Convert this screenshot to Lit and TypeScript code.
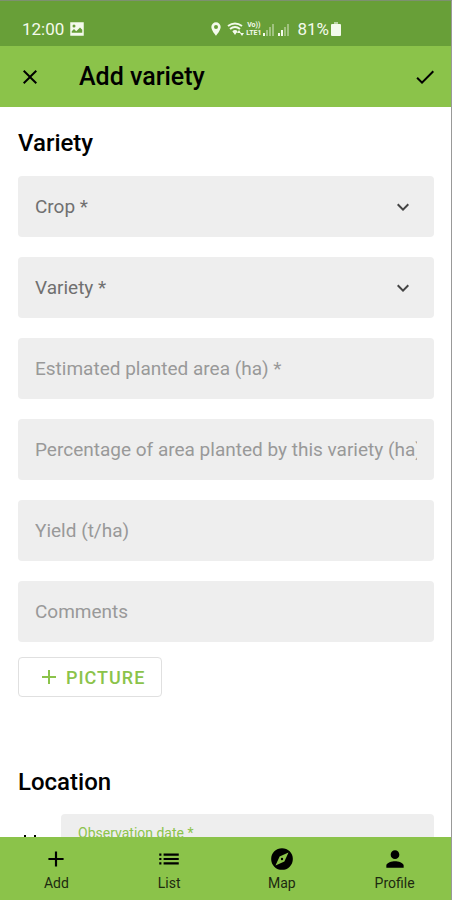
import { LitElement, html, css, svg } from "lit";
import { customElement, state } from "lit/decorators.js";

const icons = {
  close: svg`<path d="M19 6.4 17.6 5 12 10.6 6.4 5 5 6.4 10.6 12 5 17.6 6.4 19 12 13.4 17.6 19 19 17.6 13.4 12z"/>`,
  check: svg`<path d="M9 16.2 4.8 12l-1.4 1.4L9 19 21 7l-1.4-1.4z"/>`,
  plus: svg`<path d="M19 13h-6v6h-2v-6H5v-2h6V5h2v6h6z"/>`,
  list: svg`<path d="M3 13h2v-2H3zm0 4h2v-2H3zm0-8h2V7H3zm4 4h14v-2H7zm0 4h14v-2H7zM7 7v2h14V7z"/>`,
  compass: svg`<path d="M12 10.9a1.1 1.1 0 1 0 0 2.2 1.1 1.1 0 0 0 0-2.2zM12 2a10 10 0 1 0 0 20 10 10 0 0 0 0-20zm2.2 12.2L6 18l3.8-8.2L18 6z"/>`,
  person: svg`<path d="M12 12a4 4 0 1 0 0-8 4 4 0 0 0 0 8zm0 2c-2.7 0-8 1.3-8 4v2h16v-2c0-2.7-5.3-4-8-4z"/>`,
  chevron: svg`<path d="M7.4 8.6 12 13.2l4.6-4.6L18 10l-6 6-6-6z"/>`,
  calendar: svg`<path d="M19 4h-1V2h-2v2H8V2H6v2H5a2 2 0 0 0-2 2v14a2 2 0 0 0 2 2h14a2 2 0 0 0 2-2V6a2 2 0 0 0-2-2zm0 16H5V9h14z"/>`,
  picture: svg`<path fill-rule="evenodd" d="M3 3h18v18H3zM5 17h14v-4l-3-3-5 5-3-3-3 3zM8 6a2 2 0 1 0 0 4 2 2 0 0 0 0-4z"/>`,
  pin: svg`<path d="M12 2a7 7 0 0 0-7 7c0 5.200 7 13 7 13s7-7.800 7-13a7 7 0 0 0-7-7zm0 10a3 3 0 1 1 0-6 3 3 0 0 1 0 6z"/>`,
};

const icon = (name: keyof typeof icons, cls = "icon") =>
  html`<svg class=${cls} viewBox="0 0 24 24" aria-hidden="true">${icons[name]}</svg>`;

// Four bars; `level` of them are drawn at full strength.
const signal = (level: number) => html`<svg class="signal" viewBox="0 0 13 14" aria-hidden="true">
  ${[3, 6, 9, 12].map(
    (h, i) => svg`<rect x=${i * 3} y=${14 - h} width="2" height=${h} opacity=${i < level ? 1 : 0.4} />`
  )}
</svg>`;

@customElement("app-root")
export class AppRoot extends LitElement {
  @state() private selects = ["Crop *", "Variety *"];
  @state() private inputs = [
    "Estimated planted area (ha) *",
    "Percentage of area planted by this variety (ha) *",
    "Yield (t/ha)",
    "Comments",
  ];
  private tabs: [keyof typeof icons, string][] = [
    ["plus", "Add"],
    ["list", "List"],
    ["compass", "Map"],
    ["person", "Profile"],
  ];

  static styles = css`
    :host {
      display: flex;
      flex-direction: column;
      height: 100vh;
      box-sizing: border-box;
      border-top: 1px solid #7d9070;
      border-right: 1px solid #999;
      background: #fff;
      color: #000;
      font-family: Roboto, "Liberation Sans", sans-serif;
    }
    * { box-sizing: border-box; }
    button, input, select { font: inherit; color: inherit; }
    button { border: 0; background: none; padding: 0; cursor: pointer; }
    svg { display: block; fill: currentColor; flex: none; }
    h1, h2 { margin: 0; font-weight: 500; }
    .icon { width: 24px; height: 24px; }
    .status {
      display: flex;
      align-items: center;
      flex: none;
      height: 45px;
      padding: 11px 110px 0 22px;
      background: #689f38;
      color: #f4faec;
      font-size: 17px;
      line-height: 20px;
    }
    .time { margin-right: 4px; }
    .picture { width: 18px; height: 18px; }
    .indicators { display: flex; align-items: center; margin-left: auto; gap: 2px; }
    .pin { width: 18px; height: 16px; }
    .wifi { width: 17px; height: 14px; }
    .lte {
      display: flex;
      flex-direction: column;
      font-size: 7px;
      line-height: 8px;
      font-weight: 700;
      text-align: center;
    }
    .signal { width: 13px; height: 14px; }
    .level { margin-left: 4px; }
    .battery { width: 10px; height: 14px; }
    .bar {
      display: flex;
      align-items: center;
      flex: none;
      height: 61px;
      padding: 0 14px 0 18px;
      background: #8bc34a;
    }
    .title { flex: 1; margin-left: 37px; font-size: 25px; line-height: 32px; }
    .content {
      flex: 1;
      min-height: 0;
      overflow-y: auto;
      scrollbar-width: none;
      padding: 20px 17px 0 18px;
    }
    .heading { font-size: 24px; line-height: 32px; }
    .fields { display: flex; flex-direction: column; gap: 20px; margin-top: 17px; }
    .field {
      display: block;
      width: 100%;
      height: 61px;
      padding: 0 17px;
      border: 0;
      border-radius: 4px;
      background: #eee;
      color: #707070;
      font-size: 19px;
    }
    .field::placeholder { color: #999; opacity: 1; }
    .choice { display: grid; align-items: center; }
    .choice > * { grid-area: 1 / 1; }
    .choice .field { appearance: none; }
    .chevron {
      width: 24px;
      height: 24px;
      justify-self: end;
      margin-right: 19px;
      color: #444;
      pointer-events: none;
    }
    .add {
      display: flex;
      align-items: center;
      gap: 5px;
      height: 40px;
      margin: 15px 0 69px;
      padding: 0 16px 0 18px;
      border: 1px solid #e0e0e0;
      border-radius: 4px;
      color: #8bc34a;
      font-size: 18px;
      font-weight: 500;
      letter-spacing: 1px;
    }
    .date { display: flex; align-items: center; gap: 19px; margin-top: 16px; }
    .dated {
      flex: 1;
      display: flex;
      flex-direction: column;
      height: 61px;
      padding: 9px 17px;
      border-radius: 4px;
      background: #eee;
    }
    .caption { color: #8bc34a; font-size: 14px; line-height: 20px; }
    .value { width: 100%; border: 0; padding: 0; background: none; font-size: 19px; }
    .tabs {
      display: grid;
      grid-template-columns: repeat(4, 1fr);
      flex: none;
      height: 63px;
      background: #8bc34a;
    }
    .tab {
      display: flex;
      flex-direction: column;
      align-items: center;
      padding-top: 9px;
      gap: 1px;
      color: #000;
      font-size: 14px;
      line-height: 20px;
      text-decoration: none;
    }
    .tab .icon { width: 26px; height: 26px; }
    .tab span { color: #1d2a10; }
  `;

  render() {
    return html`
      <div class="status">
        <span class="time">12:00</span>${icon("picture", "picture")}
        <div class="indicators">
          ${icon("pin", "pin")}
          <svg class="wifi" viewBox="0 0 17 14" aria-hidden="true">
            <g fill="none" stroke="currentColor" stroke-width="2">
              <path d="M1 4q7-5 14 0M3 7q5-4 10 0M6 10q2-2 4 0" />
            </g>
            <path d="M6 10h4l-2 3zM12 8l2 3h-4zM15 14l-2-3h4z" />
          </svg>
          <span class="lte"><span>Vo))</span><span>LTE1</span></span>
          ${signal(1)}${signal(2)}
          <span class="level">81%</span>
          <svg class="battery" viewBox="0 0 10 14" aria-hidden="true">
            <path d="M3 0h4v2H3z" opacity=".6" /><path d="M1 2h8q1 0 1 1v10q0 1-1 1H1q-1 0-1-1V3q0-1 1-1z" />
          </svg>
        </div>
      </div>
      <header class="bar">
        <button aria-label="Close">${icon("close")}</button>
        <h1 class="title">Add variety</h1>
        <button aria-label="Save">${icon("check")}</button>
      </header>
      <main class="content">
        <h2 class="heading">Variety</h2>
        <div class="fields">
          ${this.selects.map(
            (label) => html`<div class="choice">
              <select class="field" aria-label=${label}><option>${label}</option></select>
              ${icon("chevron", "chevron")}
            </div>`
          )}
          ${this.inputs.map(
            (label) => html`<input class="field" type="text" aria-label=${label} placeholder=${label} />`
          )}
        </div>
        <button class="add">${icon("plus")}PICTURE</button>
        <h2 class="heading">Location</h2>
        <div class="date">
          ${icon("calendar")}
          <div class="dated">
            <label class="caption" for="date">Observation date *</label>
            <input class="value" id="date" type="text" />
          </div>
        </div>
      </main>
      <nav class="tabs">
        ${this.tabs.map(([name, label]) => html`<a class="tab" href="#${label}">${icon(name)}<span>${label}</span></a>`)}
      </nav>
    `;
  }
}
